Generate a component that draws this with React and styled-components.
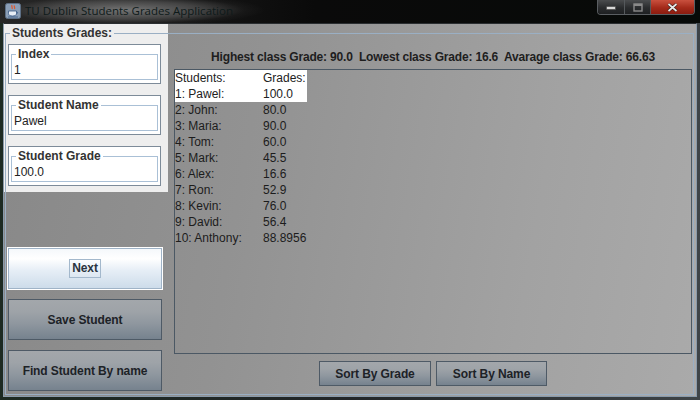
import React from "react";
import styled, { createGlobalStyle } from "styled-components";

const Global = createGlobalStyle`
  html, body { margin: 0; padding: 0; background: #000; }
  body { width: 700px; height: 400px; overflow: hidden; font-family: "Liberation Sans", Arial, sans-serif; }
  * { box-sizing: border-box; }
`;

const Window = styled.div`
  width: 700px;
  height: 400px;
  display: flex;
  flex-direction: column;
  background: #0b0d0e;
`;

const TitleBar = styled.div`
  height: 23px;
  display: flex;
  align-items: flex-start;
  padding-left: 5px;
  background:
    radial-gradient(ellipse 140px 16px at 125px 10px, rgba(120, 120, 120, 0.95), rgba(85, 85, 85, 0.7) 55%, rgba(40, 40, 40, 0.3) 85%, transparent 100%),
    linear-gradient(90deg, #262626, #0a0a0a 45%, #070a08 100%);
`;

const AppIcon = styled.svg`
  width: 16px;
  height: 16px;
  margin-top: 3px;
  flex: none;
`;

const Title = styled.span`
  margin-left: 4px;
  margin-top: 3px;
  font-family: "Open Sans", "Noto Sans", sans-serif;
  font-size: 11.5px;
  line-height: 16px;
  color: #0e1a1a;
  white-space: nowrap;
`;

const Controls = styled.div`
  margin-left: auto;
  margin-right: 5px;
  display: flex;
  height: 15px;
  border: 1px solid #5a5e62;
  border-top: none;
  border-radius: 0 0 4px 4px;
  overflow: hidden;
`;

const Ctrl = styled.div`
  width: ${(p) => p.$w}px;
  height: 100%;
  display: flex;
  align-items: center;
  justify-content: center;
  border-left: ${(p) => (p.$first ? "none" : "1px solid #55595c")};
  background: ${(p) =>
    p.$close
      ? "linear-gradient(#c9503e, #a42a1a 55%, #8c1c10)"
      : "linear-gradient(#4a4c4e, #2a2c2e 55%, #1e2022)"};
`;

const Frame = styled.div`
  flex: 1;
  display: flex;
  padding: 0 3px 3px;
  background: linear-gradient(90deg, #1d2a22, #222629 50%, #3e4448);
`;

const Content = styled.div`
  flex: 1;
  display: flex;
  flex-direction: column;
  border: 1px solid #8a9aaa;
  border-top-color: #2a2e31;
  padding: 0 2px 0 0;
  background:
    linear-gradient(#eeeeee, #eeeeee) 0 0 / 164px 168px no-repeat,
    linear-gradient(100deg, #888888 0%, #929292 35%, #a2a2a2 75%, #aaaaaa 100%);
`;

const Group = styled.fieldset`
  flex: 1;
  margin: 2px 0 1px 1px;
  padding: 0;
  min-width: 0;
  border: 1px solid #9aafc4;
  display: grid;
  grid-template-columns: 160px 1fr;
  column-gap: 8px;
`;

const GroupLegend = styled.legend`
  margin-left: 4px;
  padding: 0 2px;
  font-size: 12px;
  font-weight: bold;
  line-height: 15px;
  color: #333;
`;

const LeftCol = styled.div`
  display: flex;
  flex-direction: column;
  padding: 3px 5px 3px 2px;
`;

const Fields = styled.div`
  display: flex;
  flex-direction: column;
  gap: 11px;
`;

const FieldBox = styled.div`
  height: 40px;
  border: 1px solid #7d8b99;
  background: #ffffff;
  padding: 2px 2px 3px;
`;

const FieldSet = styled.fieldset`
  margin: 0;
  padding: 0 2px 1px;
  min-width: 0;
  border: 1px solid #aac0d6;
  height: 33px;
`;

const FieldLegend = styled.legend`
  margin-left: 2px;
  padding: 0 2px;
  font-size: 12px;
  font-weight: bold;
  line-height: 15px;
  color: #333;
`;

const FieldValue = styled.div`
  font-size: 12px;
  line-height: 17px;
  color: #222;
`;

const Buttons = styled.div`
  margin-top: auto;
  display: flex;
  flex-direction: column;
  gap: 10px;
  margin-right: -1px;
`;

const Button = styled.div`
  height: ${(p) => p.$h || 41}px;
  width: ${(p) => (p.$w ? `${p.$w}px` : "auto")};
  display: flex;
  align-items: center;
  justify-content: center;
  font-size: 12px;
  font-weight: bold;
  letter-spacing: -0.1px;
  color: #1d2227;
  border: 1px solid #4e5a66;
  background: linear-gradient(#a3a7ab 0%, #9ea3a8 30%, #8f979f 60%, #76828e 100%);
`;

const ActiveButton = styled(Button)`
  border: 1px solid #9fb3c7;
  outline: 1px solid #ffffff;
  background: linear-gradient(#f5f8fb 0%, #ffffff 25%, #e6eef6 55%, #cddcea 100%);
  color: #2a3440;
`;

const Focus = styled.span`
  border: 1px solid #a3b8cc;
  padding: 1px 2px;
  line-height: 15px;
`;

const RightCol = styled.div`
  display: flex;
  flex-direction: column;
  padding: 0 1px 8px 0;
  min-width: 0;
`;

const Stats = styled.div`
  margin-top: 8px;
  height: 16px;
  line-height: 16px;
  font-size: 12px;
  font-weight: bold;
  letter-spacing: -0.18px;
  color: #1e1e1e;
  text-align: center;
  white-space: pre;
`;

const List = styled.div`
  margin-top: 4px;
  flex: 1;
  border: 1px solid #4b5864;
`;

const Row = styled.div`
  display: grid;
  grid-template-columns: 88px 44px;
  width: 132px;
  height: 16px;
  line-height: 17px;
  font-size: 12px;
  color: ${(p) => (p.$hl ? "#222" : "#1c1c1c")};
  background: ${(p) => (p.$hl ? "#ffffff" : "transparent")};
  white-space: nowrap;
`;

const SortRow = styled.div`
  margin-top: 7px;
  display: flex;
  justify-content: center;
  gap: 5px;
`;

const rows = [
  ["Students:", "Grades:", true],
  ["1: Pawel:", "100.0", true],
  ["2: John:", "80.0"],
  ["3: Maria:", "90.0"],
  ["4: Tom:", "60.0"],
  ["5: Mark:", "45.5"],
  ["6: Alex:", "16.6"],
  ["7: Ron:", "52.9"],
  ["8: Kevin:", "76.0"],
  ["9: David:", "56.4"],
  ["10: Anthony:", "88.8956"],
];

const fields = [
  ["Index", "1"],
  ["Student Name", "Pawel"],
  ["Student Grade", "100.0"],
];

export default function App() {
  return (
    <>
      <Global />
      <Window>
        <TitleBar>
          <AppIcon viewBox="0 0 16 16">
            <rect x="0.5" y="0.5" width="15" height="15" rx="2" fill="#8a9eb6" stroke="#5d6f85" />
            <path d="M7 2c-1 1.5 1 2.5 0 4M9.5 2.5c-1 1.2 1 2 0 3.5" stroke="#e2562a" strokeWidth="1.2" fill="none" />
            <path d="M3.5 8h8v2.5c0 1.5-1.5 2.5-4 2.5s-4-1-4-2.5z" fill="#e8eef6" stroke="#3b5a86" strokeWidth="0.8" />
            <path d="M11.5 8.8c1.5 0 1.5 2-0.3 2" stroke="#3b5a86" strokeWidth="0.8" fill="none" />
            <path d="M3 14h10" stroke="#3b5a86" strokeWidth="0.8" />
          </AppIcon>
          <Title>TU Dublin Students Grades Application</Title>
          <Controls>
            <Ctrl $w={26} $first>
              <svg width="10" height="6" viewBox="0 0 10 6">
                <rect x="0.5" y="2.5" width="9" height="3" fill="#d8d8d8" stroke="#444" strokeWidth="0.6" />
              </svg>
            </Ctrl>
            <Ctrl $w={26}>
              <svg width="10" height="9" viewBox="0 0 10 9">
                <rect x="1" y="1" width="8" height="7" fill="none" stroke="#8a8a8a" strokeWidth="1.4" />
                <rect x="1" y="1" width="8" height="2" fill="#8a8a8a" />
              </svg>
            </Ctrl>
            <Ctrl $w={44} $close>
              <svg width="11" height="9" viewBox="0 0 11 9">
                <path d="M1.5 1l8 7M9.5 1l-8 7" stroke="#3a1a14" strokeWidth="3" />
                <path d="M1.5 1l8 7M9.5 1l-8 7" stroke="#e8e8e8" strokeWidth="1.7" />
              </svg>
            </Ctrl>
          </Controls>
        </TitleBar>
        <Frame>
          <Content>
            <Group>
              <GroupLegend>Students Grades:</GroupLegend>
              <LeftCol>
                <Fields>
                  {fields.map(([label, value]) => (
                    <FieldBox key={label}>
                      <FieldSet>
                        <FieldLegend>{label}</FieldLegend>
                        <FieldValue>{value}</FieldValue>
                      </FieldSet>
                    </FieldBox>
                  ))}
                </Fields>
                <Buttons>
                  <ActiveButton>
                    <Focus>Next</Focus>
                  </ActiveButton>
                  <Button>Save Student</Button>
                  <Button>Find Student By name</Button>
                </Buttons>
              </LeftCol>
              <RightCol>
                <Stats>{"Highest class Grade: 90.0  Lowest class Grade: 16.6  Avarage class Grade: 66.63"}</Stats>
                <List>
                  {rows.map(([name, grade, hl]) => (
                    <Row key={name} $hl={hl}>
                      <span>{name}</span>
                      <span>{grade}</span>
                    </Row>
                  ))}
                </List>
                <SortRow>
                  <Button $h={25} $w={112}>Sort By Grade</Button>
                  <Button $h={25} $w={111}>Sort By Name</Button>
                </SortRow>
              </RightCol>
            </Group>
          </Content>
        </Frame>
      </Window>
    </>
  );
}
